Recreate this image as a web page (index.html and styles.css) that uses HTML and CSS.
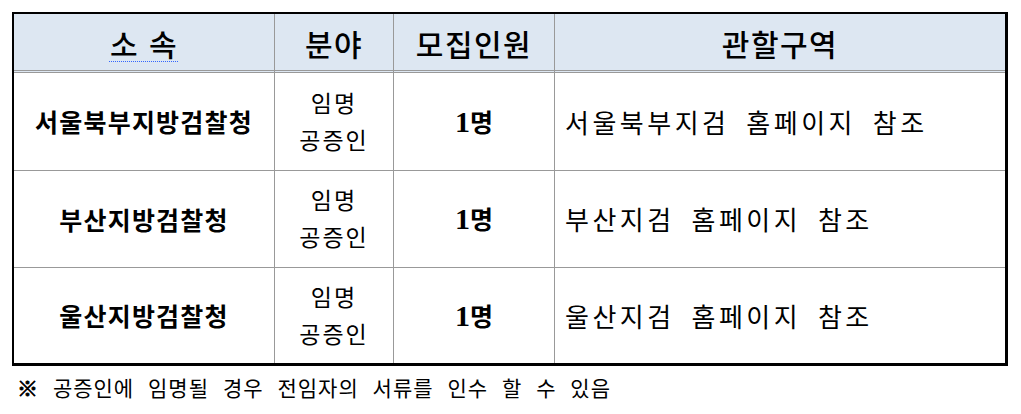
FILE: index.html
```html
<!DOCTYPE html>
<html lang="ko">
<head>
<meta charset="utf-8">
<link rel="stylesheet" href="styles.css">
</head>
<body>
<div class="tbl">
  <div class="cell head"><span class="spell">소 속</span></div>
  <div class="cell head">분야</div>
  <div class="cell head">모집인원</div>
  <div class="cell head">관할구역</div>

  <div class="cell org r1">서울북부지방검찰청</div>
  <div class="cell field r1">임명<br>공증인</div>
  <div class="cell num r1"><span class="one">1</span>명</div>
  <div class="cell area r1">서울북부지검 홈페이지 참조</div>

  <div class="cell org r2">부산지방검찰청</div>
  <div class="cell field r2">임명<br>공증인</div>
  <div class="cell num r2"><span class="one">1</span>명</div>
  <div class="cell area r2">부산지검 홈페이지 참조</div>

  <div class="cell org r3">울산지방검찰청</div>
  <div class="cell field r3">임명<br>공증인</div>
  <div class="cell num r3"><span class="one">1</span>명</div>
  <div class="cell area r3">울산지검 홈페이지 참조</div>
</div>
<p class="note"><span class="mark">※</span> <span class="spell">공증인에 임명될</span> 경우 전임자의 서류를 <span class="spell">인수</span> 할 수 있음</p>
</body>
</html>
```

FILE: styles.css
```css
html, body {
  margin: 0;
  padding: 0;
  background: #ffffff;
}
body {
  padding: 12px 0 0 12px;
  font-family: "Noto Sans CJK KR", "Noto Sans", sans-serif;
  color: #000;
}
.tbl {
  box-sizing: border-box;
  width: 996px;
  display: grid;
  grid-template-columns: 260px 119px 161px 1fr;
  grid-template-rows: 59px 98px 97px 95px;
  border-top: 2px solid #000;
  border-left: 2px solid #000;
  border-right: 3px solid #000;
  border-bottom: 3px solid #000;
}
.cell {
  box-sizing: border-box;
  display: flex;
  flex-direction: column;
  align-items: center;
  justify-content: center;
  text-align: center;
  border-left: 1px solid #999;
  border-bottom: 1px solid #999;
}
.cell:nth-child(4n+1) { border-left: none; }
.r3 { border-bottom: none; }
.head {
  background: #dde7f2;
  border-bottom: 3px double #999;
  font-size: 30px;
  font-weight: 500;
  line-height: 1;
  letter-spacing: 1.5px;
  padding-top: 1px;
}
.org {
  font-size: 25px;
  font-weight: 700;
  letter-spacing: 1.2px;
  padding-bottom: 1px;
}
.field {
  font-size: 23px;
  line-height: 37px;
  font-weight: 400;
  letter-spacing: 2px;
  padding-bottom: 2px;
}
.num {
  display: block;
  line-height: 96px;
  font-size: 25px;
  font-weight: 700;
}
.r2.num { line-height: 95px; }
.r3.num { line-height: 94px; }
.one {
  font-family: "Liberation Serif", serif;
  font-size: 30px;
}
.area {
  align-items: flex-start;
  padding-left: 10px;
  font-size: 26px;
  font-weight: 400;
  letter-spacing: 3.5px;
  word-spacing: 6px;
  padding-bottom: 1px;
}
.spell {
  text-decoration: underline dotted #3366ff;
  text-underline-offset: 5px;
  text-decoration-thickness: 1px;
}
.note {
  margin: 7px 0 0 5px;
  font-size: 21px;
  line-height: 28px;
  letter-spacing: 1px;
  word-spacing: 7px;
}
.mark {
  font-weight: 900;
  -webkit-text-stroke: 0.8px #000;
}
```
